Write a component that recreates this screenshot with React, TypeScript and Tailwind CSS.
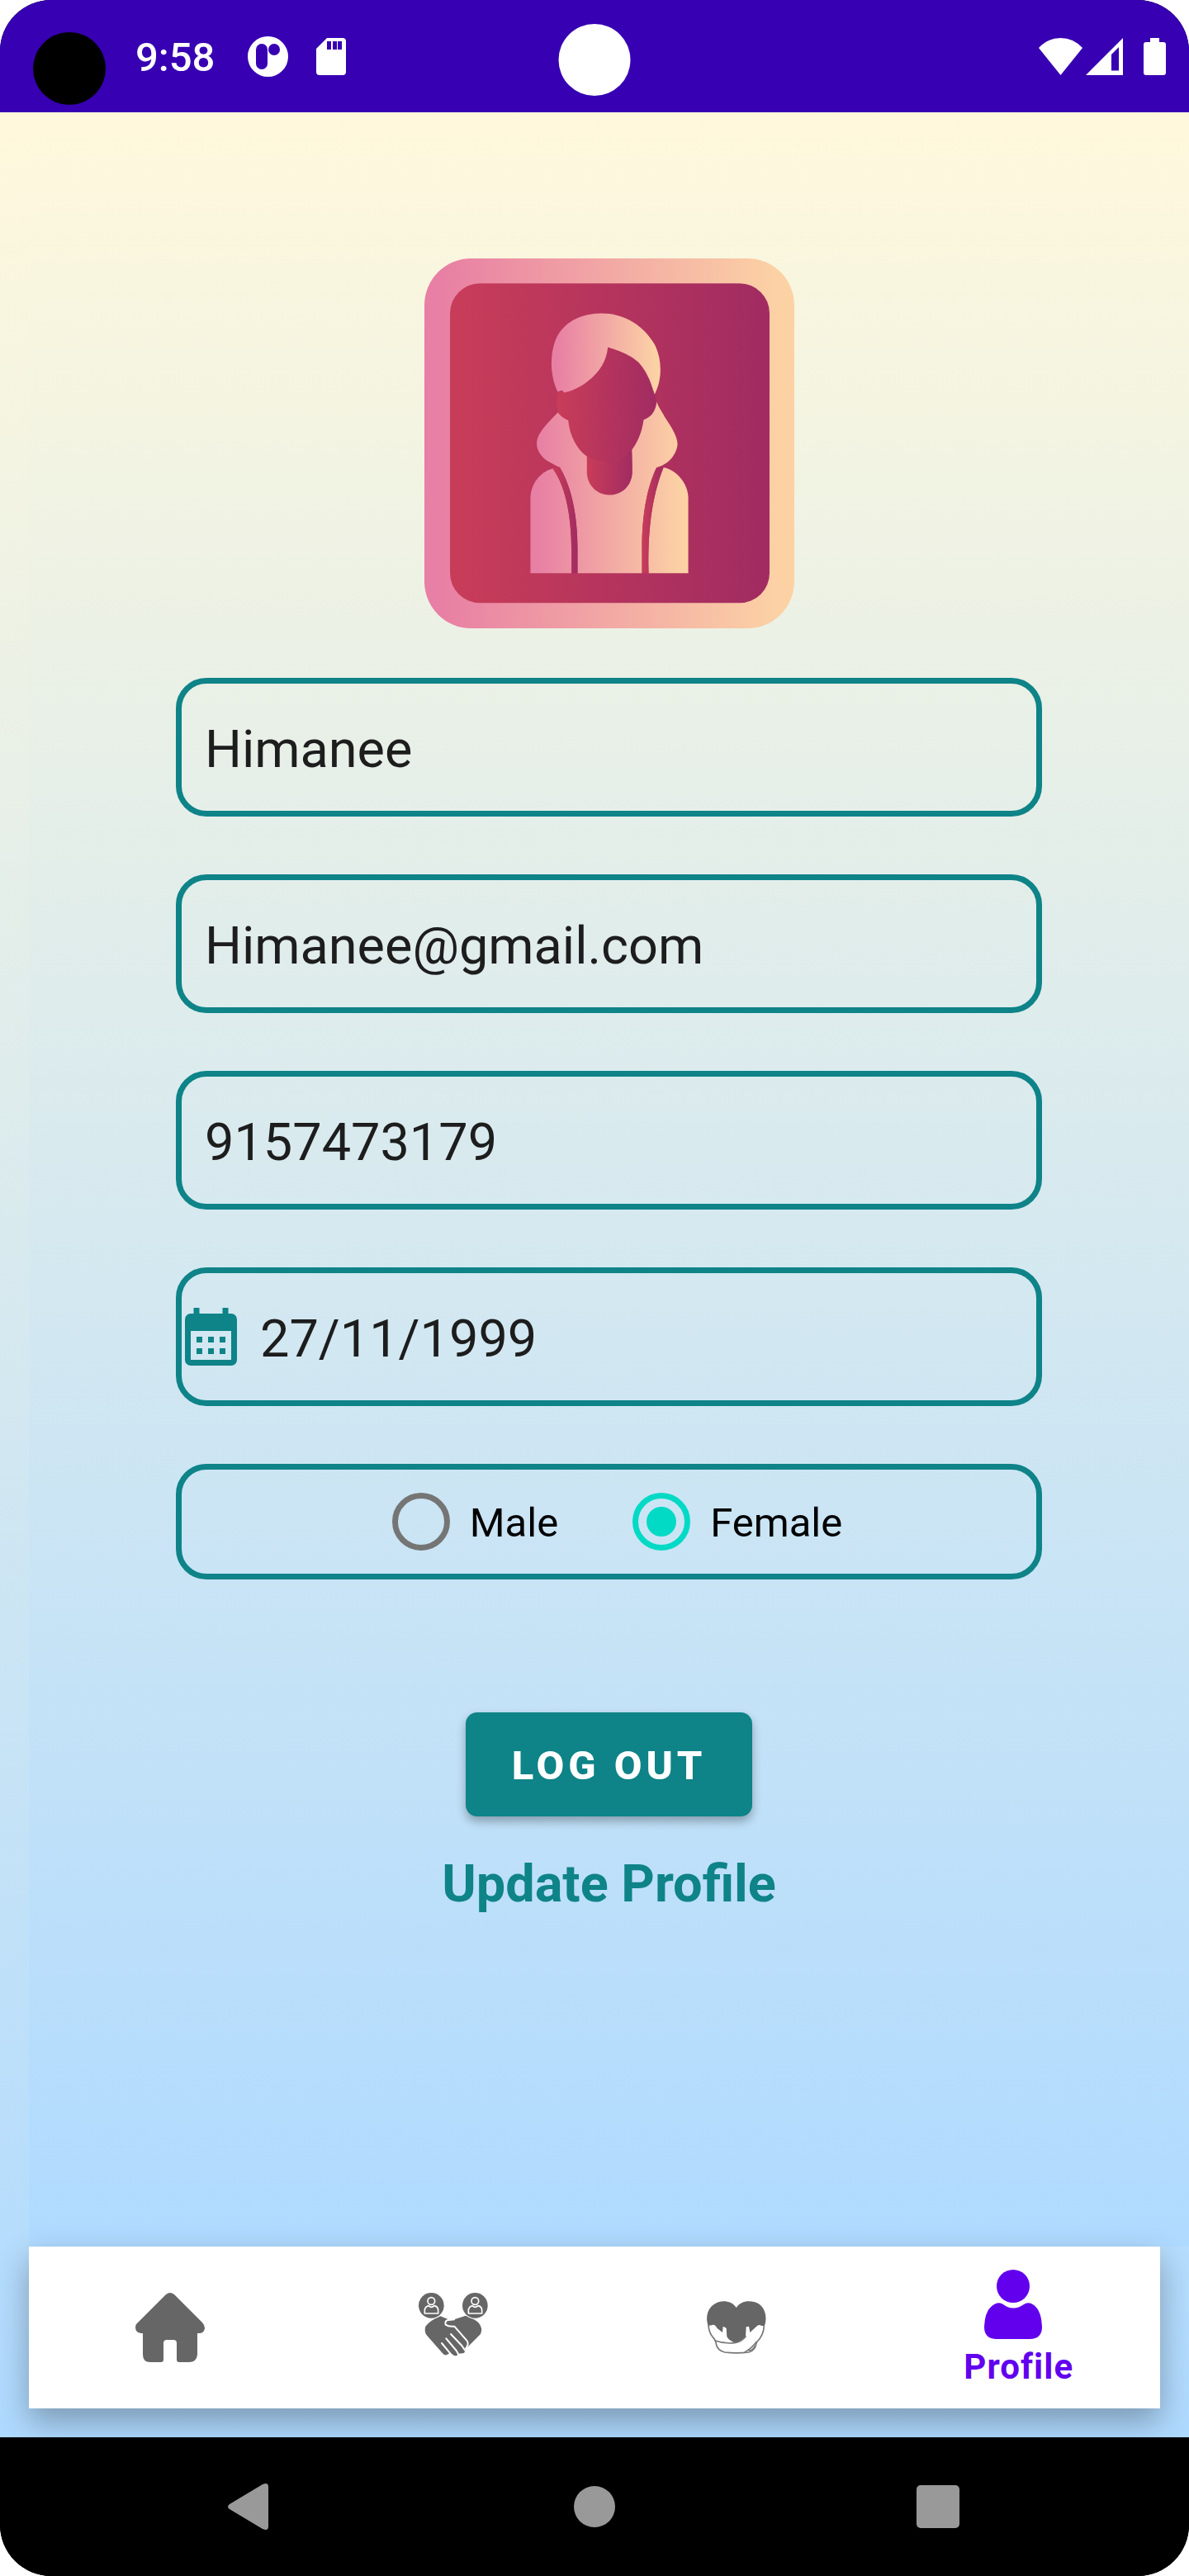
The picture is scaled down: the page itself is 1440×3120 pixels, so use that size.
import { useState } from "react";
import type { ReactNode } from "react";

function Avatar() {
  return (
    <svg viewBox="72 69 1343 1343" className="size-[448px]" role="img" aria-label="Profile picture">
      <defs>
        <linearGradient id="light">
          <stop offset="0.04" stopColor="#e87fa4" />
          <stop offset="0.96" stopColor="#fcd2a5" />
        </linearGradient>
        <linearGradient id="dark">
          <stop offset="0.04" stopColor="#c73c59" />
          <stop offset="0.96" stopColor="#a22c61" />
        </linearGradient>
        <linearGradient id="torso" gradientUnits="userSpaceOnUse" x1="457" x2="1030" y1="0" y2="0">
          <stop offset="0.04" stopColor="#e87fa4" />
          <stop offset="0.96" stopColor="#fcd2a5" />
        </linearGradient>
      </defs>
      <rect x="72" y="69" width="1343" height="1343" rx="170" fill="url(#light)" />
      <rect x="165" y="160" width="1160" height="1160" rx="108" fill="url(#dark)" />
      <path
        fill="url(#torso)"
        d="M557 628C530 655 505 680 488 710C470 745 484 775 510 798C530 812 550 820 563 828C605 895 628 1000 628 1120V1212H862V1120C862 1000 880 900 915 828C950 820 985 790 991 745C991 710 960 670 945 645C930 620 920 603 915 590Z"
      />
      <path fill="url(#torso)" d="M538 832C590 905 606 1020 606 1140V1212H457V940C457 890 490 845 538 832Z" />
      <path fill="url(#torso)" d="M940 828C985 835 1030 885 1030 940V1212H886C882 1070 895 940 940 828Z" />
      <path
        fill="url(#dark)"
        d="M538 832C590 905 606 1020 606 1140V1212H628V1120C628 1000 605 895 563 826Z"
      />
      <path
        fill="url(#dark)"
        d="M915 828C880 900 862 1000 862 1120V1212H886C882 1070 895 940 940 828Z"
      />
      <path fill="url(#dark)" d="M662 740H824C827 790 827 820 827 848C824 895 788 928 744 928C700 928 664 895 662 848Z" />
      <path
        fill="url(#dark)"
        d="M738 392C775 402 815 420 850 452C885 490 893 530 908 562L915 590C912 625 895 645 868 655C862 700 845 740 822 768C800 795 770 808 743 808C710 808 685 800 662 788C625 760 600 715 594 657C575 648 565 640 557 628C552 610 550 580 556 553L580 555C650 540 735 480 738 392Z"
      />
      <path
        fill="url(#light)"
        d="M556 553C530 500 525 425 548 365C575 300 640 268 715 268C800 268 870 315 910 385C936 440 935 510 908 562C896 530 888 490 850 447C815 415 775 403 738 391C733 440 710 480 665 515C640 535 610 550 580 556L571 548Z"
      />
    </svg>
  );
}

function CalendarIcon() {
  return (
    <svg viewBox="0 0 18 20" className="h-[70px] w-[63px] shrink-0" fill="#0e8388" aria-hidden="true">
      <path
        fillRule="evenodd"
        d="M3 0h2v2h8V0h2v2h1a2 2 0 0 1 2 2v14a2 2 0 0 1-2 2H2a2 2 0 0 1-2-2V4a2 2 0 0 1 2-2h1zM2 8v10h14V8z"
      />
      <path d="M4 10h2v2H4zM8 10h2v2H8zM12 10h2v2h-2zM4 14h2v2H4zM8 14h2v2H8zM12 14h2v2h-2z" />
    </svg>
  );
}

function HomeIcon() {
  return (
    <svg viewBox="0 0 84 84" className="size-[84px]" fill="#666" aria-hidden="true">
      <path d="M37 2Q42-2 47 2L81 36Q84 39 84 43Q83 49 77 49H75V75Q74 84 65 84H53Q50 84 50 81V61Q50 57 46 57H38Q34 57 34 61V81Q34 84 31 84H18Q9 84 9 75V49H7Q0 48 0 42Q0 38 3 36Z" />
    </svg>
  );
}

function PartnersIcon() {
  return (
    <svg viewBox="21 36 252 252" className="size-[84px]" aria-hidden="true">
      <path
        fill="#666"
        d="M100 121Q65 135 46 158Q40 178 52 192L108 256Q116 266 125 260L136 254L150 264Q160 268 165 257L180 256Q190 256 192 240L246 186Q256 164 238 144Q220 128 192 119L150 133L128 132Z"
      />
      <g fill="none" stroke="#fff" strokeWidth="6" strokeLinecap="round" strokeLinejoin="round">
        <path d="M150 133L124 136Q116 140 119 152Q130 160 151 158L198 212Q204 226 192 238" />
        <path d="M138 186L178 228L190 246" />
        <path d="M121 202L158 246L166 260" />
        <path d="M105 219L134 254L140 262" />
      </g>
      <g fill="#666">
        <circle cx="67" cy="82" r="49" fill="#fff" />
        <circle cx="226" cy="82" r="49" fill="#fff" />
        <circle cx="67" cy="82" r="46" />
        <circle cx="226" cy="82" r="46" />
      </g>
      <g fill="none" stroke="#fff" strokeWidth="5" strokeLinejoin="round">
        <circle cx="67" cy="66" r="13" />
        <path d="M43 111V98Q45 86 57 83Q67 93 78 83Q91 86 92 98V111Z" />
        <circle cx="226" cy="66" r="13" />
        <path d="M202 111V98Q204 86 216 83Q226 93 237 83Q250 86 251 98V111Z" />
      </g>
    </svg>
  );
}

function HugIcon() {
  return (
    <svg viewBox="12 6 252 252" className="size-[84px]" aria-hidden="true">
      <path
        fill="#666"
        d="M140 60C125 36 95 33 75 40C36 54 26 92 38 126L50 124Q62 118 70 134L90 150L92 128L104 134L106 165Q112 180 138 188Q165 180 174 165L176 130L186 128L190 150L212 130Q222 118 232 126L243 126C254 92 245 52 208 40C180 32 155 38 140 60Z"
      />
      <g fill="none" stroke="#777" strokeWidth="5" strokeLinecap="round">
        <path d="M39 124Q41 150 54 166Q66 178 67 192Q72 216 98 222Q140 227 186 222Q210 216 214 186Q240 160 241 126" />
        <path d="M64 180Q96 192 134 188Q160 184 174 165" />
        <path d="M172 221Q196 208 214 184M184 214Q196 220 208 200" />
      </g>
    </svg>
  );
}

function PersonIcon() {
  return (
    <svg viewBox="0 0 84 84" className="size-[84px]" fill="#6200ee" aria-hidden="true">
      <circle cx="35" cy="20" r="20" />
      <path d="M14 41Q19 39 23 42Q35 51 48 42Q52 39 57 41Q69 46 70 69Q70 84 55 84H15Q0 84 0 69Q1 46 14 41Z" />
    </svg>
  );
}

const boxClass =
  "w-full rounded-[37px] border-[7px] border-[#0e8388] bg-transparent text-[#1d1d1d]";

function TextField({ label, type, value }: { label: string; type: string; value: string }) {
  return (
    <input
      aria-label={label}
      type={type}
      defaultValue={value}
      className={`${boxClass} h-[168px] px-7 pt-1 text-[63px] outline-none`}
    />
  );
}

function Radio({
  label,
  checked,
  onSelect,
}: {
  label: string;
  checked: boolean;
  onSelect: () => void;
}) {
  return (
    <label className="flex items-center gap-6 pl-5 text-[49px] leading-[58px] text-black">
      <input
        type="radio"
        name="gender"
        checked={checked}
        onChange={onSelect}
        className="size-[70px] appearance-none rounded-full border-[7px] border-[#757575] bg-clip-content p-[10px] checked:border-[#03dac5] checked:bg-[#03dac5]"
      />
      <span className="pt-1">{label}</span>
    </label>
  );
}

function StatusBar() {
  return (
    <header className="relative flex h-[136px] items-center justify-between bg-[#3700b3] pr-7 pl-[164px] text-white">
      <span className="absolute top-[39px] left-10 size-[88px] rounded-full bg-black" />
      <span className="absolute top-[29px] left-1/2 size-[87px] -translate-x-1/2 rounded-full bg-white" />
      <div className="flex items-center">
        <time className="pt-1 text-[49px] leading-[58px] font-medium">9:58</time>
        <svg viewBox="0 0 49 49" className="ml-10 size-[49px]" aria-hidden="true">
          <circle cx="24.5" cy="24.5" r="24.5" fill="#fff" />
          <rect x="10" y="9" width="14" height="31" rx="7" fill="#3700b3" />
          <circle cx="32" cy="16" r="7" fill="#3700b3" />
        </svg>
        <svg viewBox="0 0 36 45" className="ml-[34px] h-[45px] w-9" aria-hidden="true">
          <path fill="#fff" d="M13 0H32Q36 0 36 4V41Q36 45 32 45H4Q0 45 0 41V13Z" />
          <path fill="#3700b3" d="M13 4h5v10h-5zM20 4h5v10h-5zM26 4h5v10h-5z" />
        </svg>
      </div>
      <div className="flex items-center">
        <svg viewBox="0 0 53 45" className="h-[45px] w-[53px]" aria-hidden="true">
          <path fill="#fff" d="M0 12Q11 0 26.500 0Q42 0 53 12L26.500 45Z" />
        </svg>
        <svg viewBox="0 0 45 45" className="ml-1 size-[45px]" aria-hidden="true">
          <path fill="#fff" fillRule="evenodd" d="M45 0V45H0ZM40 11L31 20V39.500H40Z" />
        </svg>
        <svg viewBox="0 0 27 45" className="ml-[25px] h-[45px] w-[27px]" aria-hidden="true">
          <path fill="#fff" d="M8 0H19V5H24Q27 5 27 8V42Q27 45 24 45H3Q0 45 0 42V8Q0 5 3 5H8Z" />
        </svg>
      </div>
    </header>
  );
}

function Tab({ label, active, children }: { label: string; active?: boolean; children: ReactNode }) {
  return (
    <a
      href="#"
      aria-label={label}
      aria-current={active ? "page" : undefined}
      className="flex flex-1 flex-col items-center justify-center"
    >
      {children}
      {active && (
        <span className="pt-3 text-[42px] leading-[44px] font-bold tracking-wide text-[#6200ee]">{label}</span>
      )}
    </a>
  );
}

function SystemNav() {
  return (
    <nav className="grid h-[168px] grid-cols-3 place-items-center bg-black px-[93px]" aria-label="System">
      <button type="button" aria-label="Back">
        <svg viewBox="0 0 56 56" className="size-14">
          <path fill="#999" d="M44 1Q51-2 51 4V52Q51 58 44 55L4 31Q0 28 4 25Z" />
        </svg>
      </button>
      <button type="button" aria-label="Home">
        <svg viewBox="0 0 56 56" className="size-14">
          <circle cx="28" cy="28" r="25" fill="#999" />
        </svg>
      </button>
      <button type="button" aria-label="Recent apps">
        <svg viewBox="0 0 56 56" className="size-14">
          <rect x="0" y="2" width="52" height="52" rx="5" fill="#999" />
        </svg>
      </button>
    </nav>
  );
}

export default function App() {
  const [gender, setGender] = useState("Female");

  return (
    <div className="flex min-h-screen flex-col overflow-hidden rounded-[62px] bg-black font-['Roboto',sans-serif]">
      <StatusBar />
      <main className="flex flex-1 flex-col overflow-hidden bg-linear-to-b from-[#fff8dc] to-[#afdaff]">
        <form
          className="ml-[35px] flex flex-1 flex-col items-center bg-linear-to-b from-[#fff8dc] to-[#afdaff] px-[178px] pt-[177px]"
          onSubmit={(e) => e.preventDefault()}
        >
          <Avatar />
          <div className="mt-[60px] flex w-full flex-col gap-[70px]">
            <TextField label="Name" type="text" value="Himanee" />
            <TextField label="Email" type="email" value="Himanee@gmail.com" />
            <TextField label="Phone" type="tel" value="9157473179" />
            <div className={`${boxClass} flex h-[168px] items-center gap-7 pl-1`}>
              <CalendarIcon />
              <input
                aria-label="Date of birth"
                type="text"
                defaultValue="27/11/1999"
                className="h-full min-w-0 flex-1 bg-transparent pt-1 text-[63px] outline-none"
              />
            </div>
            <div
              role="radiogroup"
              aria-label="Gender"
              className={`${boxClass} flex h-[140px] items-center justify-center gap-[70px]`}
            >
              <Radio label="Male" checked={gender === "Male"} onSelect={() => setGender("Male")} />
              <Radio label="Female" checked={gender === "Female"} onSelect={() => setGender("Female")} />
            </div>
          </div>
          <button
            type="submit"
            className="mt-[161px] h-[126px] rounded-[14px] bg-[#0e8388] px-14 pt-1 text-[49px] font-extrabold tracking-widest text-white shadow-[0_6px_12px_rgba(0,0,0,0.3)]"
          >
            LOG OUT
          </button>
          <a href="#" className="mt-[42px] text-[63px] leading-[80px] font-bold text-[#0e8388]">
            Update Profile
          </a>
        </form>
        <nav
          className="mx-[35px] mb-[35px] flex h-[196px] bg-white shadow-[0_16px_36px_rgba(0,0,0,0.3)]"
          aria-label="Main"
        >
          <Tab label="Home">
            <HomeIcon />
          </Tab>
          <Tab label="Partners">
            <PartnersIcon />
          </Tab>
          <Tab label="Care">
            <HugIcon />
          </Tab>
          <Tab label="Profile" active>
            <PersonIcon />
          </Tab>
        </nav>
      </main>
      <SystemNav />
    </div>
  );
}
